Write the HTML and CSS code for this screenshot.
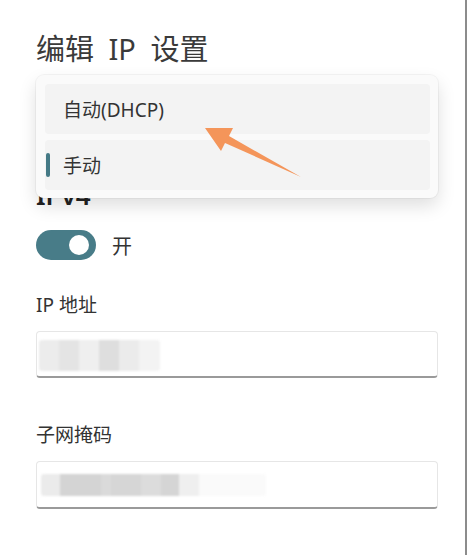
FILE: index.html
```html
<!DOCTYPE html>
<html lang="zh-CN">
<head>
    <meta charset="UTF-8">
    <meta name="viewport" content="width=device-width, initial-scale=1.0">
    <title>编辑 IP 设置</title>
    <link rel="stylesheet" href="styles.css">
</head>
<body>
    <div class="dialog">
        <h1>编辑 IP 设置</h1>

        <div class="combo">
            <div class="combo-box">手动</div>
            <ul class="menu">
                <li class="menu-item">自动(DHCP)</li>
                <li class="menu-item selected">手动</li>
            </ul>
        </div>

        <h2>IPv4</h2>
        <div class="toggle-row">
            <span class="toggle on"><span class="knob"></span></span>
            <span class="toggle-label">开</span>
        </div>

        <div class="field">
            <label>IP 地址</label>
            <div class="text-box"><span class="mask mask-ip"></span></div>
        </div>

        <div class="field">
            <label>子网掩码</label>
            <div class="text-box"><span class="mask mask-subnet"></span></div>
        </div>

        <!-- annotation arrow pointing at the DHCP option -->
        <svg class="arrow" width="467" height="555" viewBox="0 0 467 555">
            <polygon points="205,128 233,128 229,136 301,177 225,143 221,151" fill="#f4955a"/>
        </svg>
    </div>
</body>
</html>
```

FILE: styles.css
```css
body {
    margin: 0;
    background: #fff;
    font-family: "Noto Sans", "Noto Sans CJK SC", sans-serif;
    color: #333;
}
.dialog {
    position: relative;
    width: 467px;
    height: 555px;
    box-sizing: border-box;
    padding-left: 36px;
    border-right: 2px solid #8c8c8c;
    overflow: hidden;
}
h1 {
    margin: 30px 0 0;
    font-size: 29px;
    line-height: 37px;
    font-weight: 400;
    word-spacing: 7px;
    color: #3a3a3a;
}
.combo {
    position: relative;
    width: 402px;
    margin-top: 8px;
}
.combo-box {
    height: 32px;
    font-size: 19px;
}
.menu {
    position: absolute;
    left: 0;
    top: 0;
    width: 402px;
    box-sizing: border-box;
    margin: 0;
    padding: 9px 8px 8px 9px;
    list-style: none;
    display: flex;
    flex-direction: column;
    gap: 6px;
    background: #fafafa;
    border-radius: 8px;
    box-shadow: 0 8px 18px rgba(0, 0, 0, 0.13), 0 0 0 1px rgba(0, 0, 0, 0.04);
}
.menu-item {
    position: relative;
    height: 50px;
    display: flex;
    align-items: center;
    padding-left: 18px;
    background: #f3f3f3;
    border-radius: 4px;
    font-size: 19px;
    color: #333;
}
.menu-item.selected::before {
    content: "";
    position: absolute;
    left: 1px;
    top: 13px;
    width: 4px;
    height: 24px;
    border-radius: 2px;
    background: #457a86;
}
h2 {
    margin: 72px 0 0;
    font-size: 26px;
    line-height: 32px;
    font-weight: 600;
    color: #222;
}
.toggle-row {
    display: flex;
    align-items: center;
    gap: 16px;
    margin-top: 19px;
}
.toggle {
    width: 60px;
    height: 30px;
    box-sizing: border-box;
    border-radius: 15px;
    background: #487c88;
    display: flex;
    align-items: center;
    justify-content: flex-end;
    padding-right: 7px;
}
.knob {
    width: 20px;
    height: 20px;
    border-radius: 50%;
    background: #fff;
}
.toggle-label {
    font-size: 20px;
}
.field label {
    display: block;
    margin-top: 32px;
    font-size: 19px;
    line-height: 26px;
}
.field + .field label {
    margin-top: 44px;
}
.text-box {
    margin-top: 13px;
    width: 402px;
    height: 47px;
    box-sizing: border-box;
    background: #fff;
    border: 1px solid #e6e6e6;
    border-bottom: 2px solid #9a9a9a;
    border-radius: 4px;
    display: flex;
    align-items: center;
    padding-left: 2px;
}
.field + .field .text-box {
    height: 48px;
}
.mask {
    display: block;
    filter: blur(1.2px);
    border-radius: 3px;
}
.mask-ip {
    width: 121px;
    height: 31px;
    margin-top: 3px;
    background: linear-gradient(90deg, #ececec 0 20px, #e4e4e4 20px 40px, #efefef 40px 60px, #dedede 60px 80px, #ebebeb 80px 100px, #f3f3f3 100px);
}
.mask-subnet {
    width: 225px;
    height: 22px;
    margin-left: 2px;
    background: linear-gradient(90deg, #ebebeb 0 19px, #d4d4d4 19px 60px, #dadada 60px 70px, #d6d6d6 70px 100px, #dcdcdc 100px 120px, #d5d5d5 120px 138px, #efefef 138px 158px, #fafafa 158px);
}
.arrow {
    position: absolute;
    left: 0;
    top: 0;
    pointer-events: none;
}
```
